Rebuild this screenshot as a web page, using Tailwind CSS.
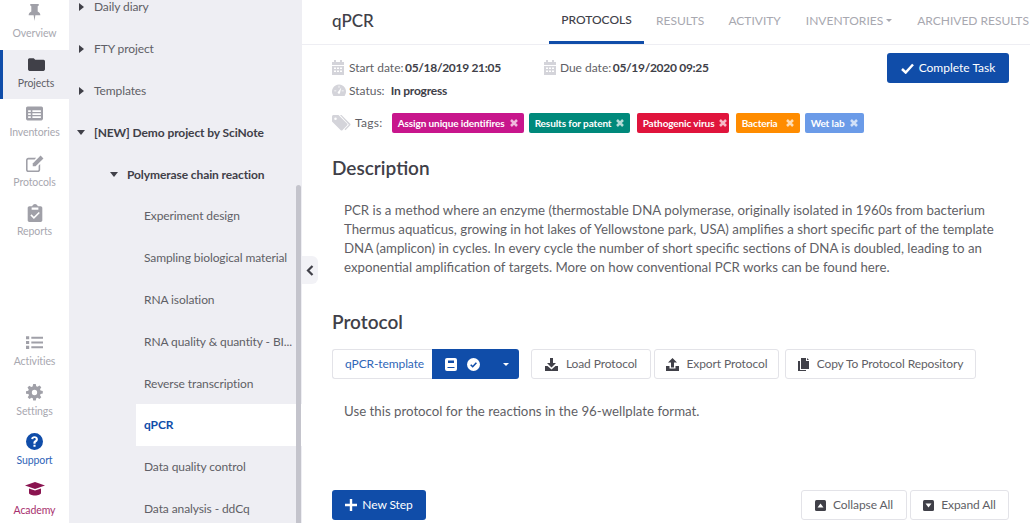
<!DOCTYPE html>
<html lang="en">
<head>
    <meta charset="UTF-8">
    <title>qPCR - SciNote</title>
    <script src="https://cdn.jsdelivr.net/npm/@tailwindcss/browser@4"></script>
</head>
<body class="bg-white font-['Lato',sans-serif] text-[#404048] antialiased">
<div class="relative flex h-[523px] w-[1030px] overflow-hidden">

    <!-- Icon rail -->
    <nav class="w-[69px] shrink-0 bg-white text-[10.5px] tracking-[-0.1px] text-[#a8a8b0]">
        <a class="flex h-[49.7px] flex-col items-center pt-[4px]">
            <svg class="h-[17px] w-[17px] fill-[#a0a0a8]" viewBox="0 0 16 16"><path d="M4 0h8v1.500l-1 .5v5c1.600.8 2.500 2 2.500 3.500H8.800L8 16l-.8-5.500H2.500C2.500 9 3.400 7.800 5 7V2l-1-.5z"/></svg>
            <span class="mt-[4px] leading-[16px]">Overview</span>
        </a>
        <a class="flex h-[49.7px] flex-col items-center border-l-[3px] border-[#104da9] bg-[#eeeef3] pt-[6px] text-[#5f5f66]">
            <svg class="h-[17px] w-[17px] fill-[#404048]" viewBox="0 0 16 16"><path d="M0 3.500C0 2.700.6 2 1.400 2h4l1.400 1.600h7.800c.8 0 1.400.7 1.400 1.500v7.400c0 .8-.6 1.500-1.400 1.500H1.400C.6 14 0 13.300 0 12.500z"/></svg>
            <span class="mt-[2px] leading-[16px]">Projects</span>
        </a>
        <a class="flex h-[49.7px] flex-col items-center pt-[6px]">
            <svg class="h-[17px] w-[17px] fill-[#a0a0a8]" viewBox="0 0 16 16"><path fill-rule="evenodd" d="M1.500 1.500h13c.8 0 1.500.7 1.500 1.500v10c0 .8-.7 1.500-1.500 1.500h-13C.7 14.500 0 13.800 0 13V3c0-.8.7-1.500 1.500-1.500zM2 5v1.700h2.500V5zm4 0v1.700h8V5zM2 7.800v1.700h2.500V7.800zm4 0v1.700h8V7.800zm-4 2.800v1.700h2.500v-1.700zm4 0v1.700h8v-1.700z"/></svg>
            <span class="mt-[2px] leading-[16px]">Inventories</span>
        </a>
        <a class="flex h-[49.7px] flex-col items-center pt-[6px]">
            <svg class="h-[18px] w-[18px] fill-[#a0a0a8]" viewBox="0 0 16 16"><path d="M2 2.500h7L7.700 3.900H2.300c-.5 0-.9.400-.9.900v8c0 .5.400.9.900.9h8c.5 0 .9-.4.900-.9V9.500l1.400-1.400v4.900c0 1.200-1 2.100-2.100 2.100H2c-1.100 0-2-.9-2-2.100V4.600c0-1.200.9-2.100 2-2.100z"/><path d="M13 .5 15.500 3 8.500 10H6V7.500z"/></svg>
            <span class="mt-[1px] leading-[16px]">Protocols</span>
        </a>
        <a class="flex h-[49.7px] flex-col items-center pt-[5px]">
            <svg class="h-[18px] w-[18px] fill-[#a0a0a8]" viewBox="0 0 16 16"><path fill-rule="evenodd" d="M5.500 2C5.700.9 6.800 0 8 0s2.300.9 2.500 2H13c.8 0 1.500.7 1.500 1.500V14.500c0 .8-.7 1.500-1.500 1.500H3c-.8 0-1.500-.7-1.500-1.500V3.500C1.500 2.700 2.200 2 3 2zM5 3v2h6V3zm6.300 4L7 11.300 4.900 9.200l-1 1L7 13.300l5.300-5.300z"/></svg>
            <span class="mt-[1px] leading-[16px]">Reports</span>
        </a>

        <div class="mt-[78.500px]">
            <a class="flex h-[49.5px] flex-col items-center pt-[7px]">
                <svg class="h-[17px] w-[17px] fill-[#a0a0a8]" viewBox="0 0 16 16"><path d="M0 2h3v3H0zm5 .5h11v2H5zM0 6.500h3v3H0zm5 .5h11v2H5zM0 11h3v3H0zm5 .5h11v2H5z"/></svg>
                <span class="mt-[2px] leading-[16px]">Activities</span>
            </a>
            <a class="flex h-[49.5px] flex-col items-center pt-[7.500px]">
                <svg class="h-[17px] w-[17px] fill-[#a0a0a8]" viewBox="0 0 16 16"><path fill-rule="evenodd" d="M6.800 0h2.400l.4 2.100 1.300.5 1.800-1.200 1.700 1.700-1.200 1.800.5 1.300 2.100.4v2.400l-2.100.4-.5 1.300 1.200 1.800-1.700 1.700-1.800-1.200-1.300.5-.4 2.100H6.800l-.4-2.100-1.300-.5-1.800 1.200-1.700-1.700 1.200-1.800-.5-1.300L0 9.200V6.800l2.100-.4.500-1.300-1.200-1.800 1.700-1.700 1.800 1.200 1.300-.5zM8 5.500a2.500 2.500 0 1 0 0 5 2.500 2.500 0 0 0 0-5z"/></svg>
                <span class="mt-[2px] leading-[16px]">Settings</span>
            </a>
            <a class="flex h-[49.5px] flex-col items-center pt-[7px] text-[#2f66b8]">
                <svg class="h-[17px] w-[17px] fill-[#104da9]" viewBox="0 0 16 16"><path fill-rule="evenodd" d="M8 0a8 8 0 1 1 0 16A8 8 0 0 1 8 0zM7 11v2h2v-2zM8 3C6.300 3 5 4 4.900 5.600l1.900.3C6.900 5.200 7.300 4.800 8 4.800s1.200.4 1.200 1c0 .5-.3.800-1 1.300C7.300 7.700 7 8.300 7 9.100V10h2v-.6c0-.4.200-.6.800-1 .9-.6 1.400-1.400 1.400-2.500C11.200 4.200 9.800 3 8 3z"/></svg>
                <span class="mt-[2px] leading-[16px]">Support</span>
            </a>
            <a class="flex h-[49.5px] flex-col items-center pt-[7px] text-[#a8306e]">
                <svg class="h-[15px] w-[20px] fill-[#8a1450]" viewBox="0 0 20 15"><path d="M10 0 20 3.500 10 7 0 3.500z"/><path d="M4 6.500 10 8.500l6-2V11c0 1.300-2.700 2.500-6 2.500S4 12.300 4 11z"/></svg>
                <span class="mt-[5px] leading-[16px]">Academy</span>
            </a>
        </div>
    </nav>

    <!-- Project tree -->
    <aside class="relative h-full w-[233px] shrink-0 overflow-hidden bg-[#eeeef3] text-[12px] tracking-[-0.1px] whitespace-nowrap text-[#5f5f66]">
        <ul class="mt-[-13.500px]">
            <li class="flex h-[41.8px] items-center pl-[10px]"><svg class="mr-[10px] h-[8px] w-[5px] fill-[#404048]" viewBox="0 0 5 8"><path d="M0 0l5 4-5 4z"/></svg>Daily diary</li>
            <li class="flex h-[41.8px] items-center pl-[10px]"><svg class="mr-[10px] h-[8px] w-[5px] fill-[#404048]" viewBox="0 0 5 8"><path d="M0 0l5 4-5 4z"/></svg>FTY project</li>
            <li class="flex h-[41.8px] items-center pl-[10px]"><svg class="mr-[10px] h-[8px] w-[5px] fill-[#404048]" viewBox="0 0 5 8"><path d="M0 0l5 4-5 4z"/></svg>Templates</li>
            <li class="flex h-[41.8px] items-center pl-[8px] font-bold text-[#404048]"><svg class="mr-[9px] h-[5px] w-[8px] fill-[#404048]" viewBox="0 0 8 5"><path d="M0 0h8L4 5z"/></svg>[NEW] Demo project by SciNote</li>
            <li class="flex h-[41.8px] items-center pl-[41px] font-bold text-[#404048]"><svg class="mr-[9px] h-[5px] w-[8px] fill-[#404048]" viewBox="0 0 8 5"><path d="M0 0h8L4 5z"/></svg>Polymerase chain reaction</li>
            <li class="flex h-[41.8px] items-center pl-[75px]">Experiment design</li>
            <li class="flex h-[41.8px] items-center pl-[75px]">Sampling biological material</li>
            <li class="flex h-[41.8px] items-center pl-[75px]">RNA isolation</li>
            <li class="flex h-[41.8px] items-center pl-[75px]">RNA quality &amp; quantity - BI...</li>
            <li class="flex h-[41.8px] items-center pl-[75px]">Reverse transcription</li>
            <li class="ml-[67px] flex h-[41.8px] items-center bg-white pl-[8px] font-bold text-[#104da9]">qPCR</li>
            <li class="flex h-[41.8px] items-center pl-[75px]">Data quality control</li>
            <li class="flex h-[41.8px] items-center pl-[75px]">Data analysis - ddCq</li>
        </ul>
        <div class="absolute top-[185px] right-[1px] h-[338px] w-[5px] rounded-t-[3px] bg-[#c4c4cc]"></div>
    </aside>

    <!-- Collapse handle -->
    <button class="absolute top-[256px] left-[302px] flex h-[28px] w-[16px] items-center justify-center rounded-r-[6px] bg-[#f2f2f6]">
        <svg class="h-[11px] w-[8px] fill-none stroke-[#404048] stroke-[2.200]" viewBox="0 0 8 11"><path d="M6.500 1 2 5.500l4.500 4.500"/></svg>
    </button>

    <!-- Task content -->
    <main class="min-w-0 flex-1">
        <header class="flex h-[45px] items-center border-b border-[#eeeef3] pl-[30px]">
            <h1 class="mb-[4px] w-[217px] shrink-0 text-[17px] leading-none font-medium text-[#404048]">qPCR</h1>
            <div class="flex h-full items-center text-[12px] whitespace-nowrap text-[#a8a8b0]">
                <a class="flex h-full w-[95px] items-center justify-center border-b-[3px] border-[#104da9] pb-[2px] font-medium text-[#404048]">PROTOCOLS</a>
                <a class="mb-[3px] ml-[12px]">RESULTS</a>
                <a class="mb-[3px] ml-[24px]">ACTIVITY</a>
                <a class="mb-[3px] ml-[25px] flex items-center">INVENTORIES<svg class="ml-[3px] h-[3px] w-[6px] fill-[#a8a8b0]" viewBox="0 0 6 3"><path d="M0 0h6L3 3z"/></svg></a>
                <a class="mb-[3px] ml-[25px]">ARCHIVED RESULTS</a>
            </div>
        </header>

        <div class="pr-[21px] pl-[30px]">
            <div class="flex items-start justify-between pt-[8px]">
                <div class="pt-[3px] text-[12px] whitespace-nowrap text-[#5f5f66]">
                    <div class="flex h-[23px] items-center">
                        <svg class="mr-[5px] h-[15px] w-[12px] fill-[#d4d4da]" viewBox="0 0 12 15"><path fill-rule="evenodd" d="M2 0h2v2h4V0h2v2h2v3H0V2h2zM0 6h12v9H0zm2 1.500V9h2V7.500zm3 0V9h2V7.500zm3 0V9h2V7.500zm-6 3V12h2v-1.500zm3 0V12h2v-1.500zm3 0V12h2v-1.500z"/></svg>
                        <span>Start date:</span>
                        <span class="ml-[1.500px] font-bold tracking-[-0.3px] text-[#404048]">05/18/2019 21:05</span>
                        <svg class="mr-[4px] ml-[43px] h-[15px] w-[12px] fill-[#d4d4da]" viewBox="0 0 12 15"><path fill-rule="evenodd" d="M2 0h2v2h4V0h2v2h2v3H0V2h2zM0 6h12v9H0zm2 1.500V9h2V7.500zm3 0V9h2V7.500zm3 0V9h2V7.500zm-6 3V12h2v-1.500zm3 0V12h2v-1.500zm3 0V12h2v-1.500z"/></svg>
                        <span>Due date:</span>
                        <span class="ml-[1.500px] font-bold tracking-[-0.3px] text-[#404048]">05/19/2020 09:25</span>
                    </div>
                    <div class="flex h-[23px] items-center">
                        <svg class="mr-[3px] h-[14px] w-[14px] fill-[#d4d4da]" viewBox="0 0 14 14"><path fill-rule="evenodd" d="M7 .5a7 7 0 0 1 6.200 10.300l-.6 1.200H1.400l-.6-1.200A7 7 0 0 1 7 .5zm-.4 1.300v2h.8v-2zM2.300 6.400v.8h2v-.8zm7.400 0v.8h2v-.8zM9.300 3.500 6.300 7.600a1.200 1.200 0 1 0 1.800 1z"/></svg>
                        <span>Status:</span>
                        <span class="ml-[6px] font-bold tracking-[-0.2px] text-[#404048]">In progress</span>
                    </div>
                    <div class="mt-[10px] flex h-[22px] items-center">
                        <svg class="mr-[4px] h-[16px] w-[19px] fill-[#d4d4da]" viewBox="0 0 19 16"><path fill-rule="evenodd" d="M0 1.500C0 .7.700 0 1.500 0h5L15 8.500a1.500 1.500 0 0 1 0 2.100l-4.400 4.400a1.500 1.500 0 0 1-2.100 0L0 6.500zM3.500 2.500a1.300 1.300 0 1 0 0 2.600 1.300 1.300 0 0 0 0-2.600z"/><path d="M8 0h1.500l8.500 8.500a1.500 1.500 0 0 1 0 2.100L13.500 15.200l-1-1 4.400-4.400z"/></svg>
                        <span class="tracking-[0.3px]">Tags:</span>
                        <div class="ml-[9px] flex text-[10px] font-bold tracking-[-0.1px] text-white">
                            <span class="flex h-[20px] w-[132px] items-center justify-between rounded-[2px] bg-[#c8168c] px-[6px]">Assign unique identifires<svg class="h-[8px] w-[8px] shrink-0 stroke-white/70 stroke-[2.500]" viewBox="0 0 8 8"><path d="M1 1l6 6M7 1 1 7"/></svg></span>
                            <span class="ml-[5px] flex h-[20px] w-[101px] items-center justify-between rounded-[2px] bg-[#00897b] px-[6px]">Results for patent<svg class="h-[8px] w-[8px] shrink-0 stroke-white/70 stroke-[2.500]" viewBox="0 0 8 8"><path d="M1 1l6 6M7 1 1 7"/></svg></span>
                            <span class="ml-[7px] flex h-[20px] w-[92px] items-center justify-between rounded-[2px] bg-[#e0143c] pr-[2px] pl-[6px]">Pathogenic virus<svg class="h-[8px] w-[8px] shrink-0 stroke-white/70 stroke-[2.500]" viewBox="0 0 8 8"><path d="M1 1l6 6M7 1 1 7"/></svg></span>
                            <span class="ml-[7px] flex h-[20px] w-[64px] items-center justify-between rounded-[2px] bg-[#ff8c00] px-[6px]">Bacteria<svg class="h-[8px] w-[8px] shrink-0 stroke-white/70 stroke-[2.500]" viewBox="0 0 8 8"><path d="M1 1l6 6M7 1 1 7"/></svg></span>
                            <span class="ml-[5px] flex h-[20px] w-[59px] items-center justify-between rounded-[2px] bg-[#6b9be8] px-[6px]">Wet lab<svg class="h-[8px] w-[8px] shrink-0 stroke-white/70 stroke-[2.500]" viewBox="0 0 8 8"><path d="M1 1l6 6M7 1 1 7"/></svg></span>
                        </div>
                    </div>
                </div>
                <button class="flex h-[30px] w-[122px] items-center justify-center gap-[5px] rounded-[3px] bg-[#104da9] text-[12px] text-white">
                    <svg class="h-[11px] w-[13px] fill-none stroke-white stroke-[2.500]" viewBox="0 0 13 11"><path d="M1 6l3.700 3.500L12 1.500"/></svg>
                    Complete Task
                </button>
            </div>

            <h2 class="mt-[20px] h-[28px] text-[19px] leading-[28px] font-semibold text-[#404048]">Description</h2>
            <p class="mt-[18.500px] pl-[12px] text-[13.250px] leading-[19px] whitespace-nowrap text-[#5f5f66]">
                PCR is a method where an enzyme (thermostable DNA polymerase, originally isolated in 1960s from bacterium<br>
                Thermus aquaticus, growing in hot lakes of Yellowstone park, USA) amplifies a short specific part of the template<br>
                DNA (amplicon) in cycles. In every cycle the number of short specific sections of DNA is doubled, leading to an<br>
                exponential amplification of targets. More on how conventional PCR works can be found here.
            </p>

            <h2 class="mt-[31.500px] h-[28px] text-[19px] leading-[28px] font-semibold text-[#404048]">Protocol</h2>
            <div class="mt-[13px] flex text-[12px] tracking-[-0.1px] whitespace-nowrap text-[#5f5f66]">
                <div class="flex h-[30px] w-[100px] items-center rounded-l-[3px] border border-r-0 border-[#e3e3e8] pl-[12px] text-[#2f66b8]">qPCR-template</div>
                <div class="flex h-[30px] w-[87px] items-center rounded-r-[3px] bg-[#104da9] pl-[13px]">
                    <svg class="h-[13px] w-[12px] fill-white" viewBox="0 0 12 13"><path fill-rule="evenodd" d="M2 0h8a2 2 0 0 1 2 2v9a2 2 0 0 1-2 2H2a2 2 0 0 1-2-2V2a2 2 0 0 1 2-2zm1 2.500v2.500h6V2.500zM2.500 9v1h7V9z"/></svg>
                    <svg class="ml-[10px] h-[13px] w-[13px]" viewBox="0 0 13 13"><circle cx="6.500" cy="6.500" r="6.500" fill="white"/><path d="M3.700 6.700l2 2 3.700-4" fill="none" stroke="#104da9" stroke-width="1.600"/></svg>
                    <svg class="ml-[23px] h-[3px] w-[6px] fill-white" viewBox="0 0 6 3"><path d="M0 0h6L3 3z"/></svg>
                </div>
                <button class="ml-[12px] flex h-[30px] w-[120px] items-center justify-center gap-[8px] rounded-[3px] border border-[#e3e3e8]">
                    <svg class="h-[13px] w-[13px] fill-[#404048]" viewBox="0 0 13 13"><path d="M5 0h3v5h3L6.500 9.500 2 5h3z"/><path d="M0 8h2.500l4 3.500 4-3.500H13v5H0z"/></svg>
                    Load Protocol
                </button>
                <button class="ml-[3px] flex h-[30px] w-[125px] items-center justify-center gap-[8px] rounded-[3px] border border-[#e3e3e8]">
                    <svg class="h-[13px] w-[13px] fill-[#404048]" viewBox="0 0 13 13"><path d="M6.500 0 11 4.500H8v5H5v-5H2z"/><path d="M0 8h3.500v2.500h6V8H13v5H0z"/></svg>
                    Export Protocol
                </button>
                <button class="ml-[6px] flex h-[30px] w-[191px] items-center justify-center gap-[8px] rounded-[3px] border border-[#e3e3e8]">
                    <svg class="h-[13px] w-[11px] fill-[#404048]" viewBox="0 0 11 13"><path d="M3 0h5v3h3v8H3z"/><path d="M9 0l2 2H9zM0 3h2v9h6v1H0z"/></svg>
                    Copy To Protocol Repository
                </button>
            </div>
            <p class="mt-[22.500px] pl-[12px] text-[13.250px] leading-[19px] text-[#5f5f66]">Use this protocol for the reactions in the 96-wellplate format.</p>

            <div class="mt-[69.500px] flex items-center justify-between text-[12px] tracking-[-0.1px] whitespace-nowrap text-[#5f5f66]">
                <button class="flex h-[30px] w-[94px] items-center justify-center gap-[5px] rounded-[3px] bg-[#104da9] text-white">
                    <svg class="h-[12px] w-[12px] fill-white" viewBox="0 0 12 12"><path d="M4.800 0h2.400v4.800H12v2.400H7.200V12H4.800V7.200H0V4.800h4.800z"/></svg>
                    New Step
                </button>
                <div class="flex gap-[3px]">
                    <button class="flex h-[30px] w-[106px] items-center justify-center gap-[7px] rounded-[3px] border border-[#e3e3e8]">
                        <svg class="h-[11px] w-[11px]" viewBox="0 0 11 11"><rect width="11" height="11" rx="1.500" fill="#404048"/><path d="M2.500 7.500h6L5.500 3.500z" fill="white"/></svg>
                        Collapse All
                    </button>
                    <button class="flex h-[30px] w-[99px] items-center justify-center gap-[7px] rounded-[3px] border border-[#e3e3e8]">
                        <svg class="h-[11px] w-[11px]" viewBox="0 0 11 11"><rect width="11" height="11" rx="1.500" fill="#404048"/><path d="M2.500 3.500h6l-3 4z" fill="white"/></svg>
                        Expand All
                    </button>
                </div>
            </div>
        </div>
    </main>
</div>
</body>
</html>
